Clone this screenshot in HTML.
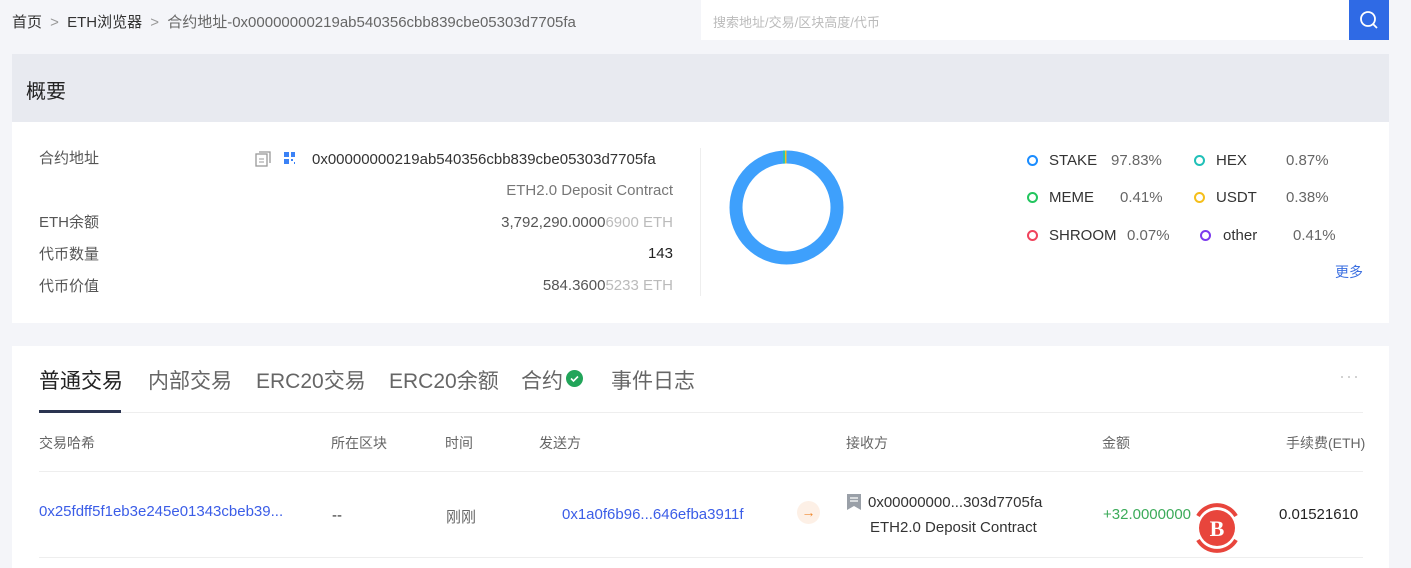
<!DOCTYPE html><html><head><meta charset="utf-8"><style>
*{margin:0;padding:0;box-sizing:border-box}
body{width:1411px;height:568px;background:#f4f5f9;font-family:"Liberation Sans","Noto Sans CJK SC",sans-serif;position:relative;overflow:hidden;color:#333}
.a{position:absolute;white-space:nowrap}
.d{position:absolute;width:11px;height:11px;border:2px solid;border-radius:50%}
.l{position:absolute;font-size:15px;color:#333;white-space:nowrap}
.p{position:absolute;font-size:15px;color:#666;white-space:nowrap}
.t{position:absolute;top:365px;font-size:20px;color:#666;white-space:nowrap}
</style></head><body>
<div class="a" style="left:12px;top:11px;font-size:15px;color:#333">首页 <span style="color:#999;margin:0 4px">&gt;</span> ETH浏览器 <span style="color:#999;margin:0 4px">&gt;</span> <span style="color:#666">合约地址-0x00000000219ab540356cbb839cbe05303d7705fa</span></div>
<div class="a" style="left:701px;top:0;width:648px;height:40px;background:#fff"></div>
<div class="a" style="left:713px;top:12px;font-size:13px;color:#bbb">搜索地址/交易/区块高度/代币</div>
<div class="a" style="left:1349px;top:0;width:40px;height:40px;background:#2f6ae5"><svg width="40" height="40"><circle cx="19" cy="19" r="7" fill="none" stroke="#fff" stroke-width="1.8"/><path d="M24 24l4 4" stroke="#fff" stroke-width="1.8"/></svg></div>

<div class="a" style="left:12px;top:54px;width:1377px;height:68px;background:#e8eaf0"></div>
<div class="a" style="left:26px;top:75px;font-size:20px;color:#222">概要</div>
<div class="a" style="left:12px;top:122px;width:1377px;height:201px;background:#fff"></div>
<div class="a" style="left:39px;top:143px;font-size:15px;color:#555;line-height:32px">合约地址<br><br>ETH余额<br>代币数量<br>代币价值</div>
<svg class="a" style="left:255px;top:151px" width="40" height="16"><rect x="1" y="3" width="11" height="12" fill="none" stroke="#999" stroke-width="1.3"/><path d="M4 1h11v11" fill="none" stroke="#999" stroke-width="1.3"/><path d="M4 8h5M4 11h5" stroke="#999"/><g fill="#3b82f6"><rect x="29" y="1" width="5" height="5"/><rect x="36" y="1" width="5" height="5"/><rect x="29" y="8" width="5" height="5"/><rect x="36" y="8" width="2" height="2"/><rect x="39" y="11" width="2" height="2"/></g></svg>
<div class="a" style="left:312px;top:151px;font-size:15px;color:#333">0x00000000219ab540356cbb839cbe05303d7705fa</div>
<div class="a" style="right:738px;top:182px;font-size:15px;color:#777">ETH2.0 Deposit Contract</div>
<div class="a" style="right:738px;top:214px;font-size:15px;color:#555">3,792,290.0000<span style="color:#bbb">6900 ETH</span></div>
<div class="a" style="right:738px;top:245px;font-size:15px;color:#222">143</div>
<div class="a" style="right:738px;top:277px;font-size:15px;color:#555">584.3600<span style="color:#bbb">5233 ETH</span></div>
<div class="a" style="left:700px;top:148px;width:1px;height:148px;background:#eee"></div>
<svg class="a" style="left:729px;top:150px" width="115" height="115"><circle cx="57.5" cy="57.5" r="50.5" fill="none" stroke="#3ea0fc" stroke-width="13"/><path d="M54 0.5h2v13h-2z" fill="#2bc2b8"/><path d="M56 0.5h1.5v13H56z" fill="#f4c21c"/></svg>

<div class="d" style="left:1027px;top:155px;border-color:#1a8cff"></div><div class="l" style="left:1049px;top:152px">STAKE</div><div class="p" style="left:1111px;top:152px">97.83%</div>
<div class="d" style="left:1194px;top:155px;border-color:#20c0b8"></div><div class="l" style="left:1216px;top:152px">HEX</div><div class="p" style="left:1286px;top:152px">0.87%</div>
<div class="d" style="left:1027px;top:192px;border-color:#22c55e"></div><div class="l" style="left:1049px;top:189px">MEME</div><div class="p" style="left:1120px;top:189px">0.41%</div>
<div class="d" style="left:1194px;top:192px;border-color:#f5bf1b"></div><div class="l" style="left:1216px;top:189px">USDT</div><div class="p" style="left:1286px;top:189px">0.38%</div>
<div class="d" style="left:1027px;top:230px;border-color:#f0435c"></div><div class="l" style="left:1049px;top:227px">SHROOM</div><div class="p" style="left:1127px;top:227px">0.07%</div>
<div class="d" style="left:1200px;top:230px;border-color:#7c3aed"></div><div class="l" style="left:1223px;top:227px">other</div><div class="p" style="left:1293px;top:227px">0.41%</div>
<div class="a" style="left:1335px;top:262px;font-size:14px;color:#3b6fe0">更多</div>

<div class="a" style="left:12px;top:346px;width:1377px;height:222px;background:#fff"></div>
<div class="t" style="left:39px;color:#222;font-size:21px">普通交易</div>
<div class="t" style="left:148px;font-size:21px">内部交易</div>
<div class="t" style="left:256px;font-size:21px">ERC20交易</div>
<div class="t" style="left:389px;font-size:21px">ERC20余额</div>
<div class="t" style="left:521px;font-size:21px">合约</div>
<div class="a" style="left:566px;top:370px;width:17px;height:17px;border-radius:50%;background:#22a55a"><svg width="17" height="17"><path d="M5 8.5l2.5 2.5 4.5-4.5" fill="none" stroke="#fff" stroke-width="1.6"/></svg></div>
<div class="t" style="left:611px;font-size:21px">事件日志</div>
<div class="a" style="left:1339px;top:366px;font-size:18px;color:#ccc;letter-spacing:1px">···</div>
<div class="a" style="left:39px;top:412px;width:1324px;height:1px;background:#eee"></div>
<div class="a" style="left:39px;top:410px;width:82px;height:3px;background:#2a3450"></div>
<div class="a" style="left:39px;top:433px;width:1324px;font-size:14px;color:#666"><span class="a" style="left:0">交易哈希</span><span class="a" style="left:292px">所在区块</span><span class="a" style="left:406px">时间</span><span class="a" style="left:500px">发送方</span><span class="a" style="left:807px">接收方</span><span class="a" style="left:1063px">金额</span><span class="a" style="left:1247px">手续费(ETH)</span></div>
<div class="a" style="left:39px;top:471px;width:1324px;height:1px;background:#eee"></div>
<div class="a" style="left:39px;top:557px;width:1324px;height:1px;background:#eee"></div>
<div class="a" style="left:39px;top:503px;font-size:15px;color:#3b5de7">0x25fdff5f1eb3e245e01343cbeb39...</div>
<div class="a" style="left:332px;top:507px;font-size:15px;color:#333">--</div>
<div class="a" style="left:446px;top:506px;font-size:15px;color:#666">刚刚</div>
<div class="a" style="left:562px;top:506px;font-size:15px;color:#3b5de7">0x1a0f6b96...646efba3911f</div>
<div class="a" style="left:797px;top:501px;width:23px;height:23px;border-radius:50%;background:#fdf0e6;color:#f08a30;font-size:14px;text-align:center;line-height:23px">→</div>
<svg class="a" style="left:847px;top:494px" width="14" height="16"><path d="M0 0h14v16l-7-4-7 4z" fill="#9aa0a8"/><path d="M3 4h8M3 7h8" stroke="#fff" stroke-width="1.3"/></svg>
<div class="a" style="left:868px;top:494px;font-size:15px;color:#333">0x00000000...303d7705fa</div>
<div class="a" style="left:870px;top:519px;font-size:15px;color:#333">ETH2.0 Deposit Contract</div>
<div class="a" style="left:1103px;top:506px;font-size:15px;color:#3cab5a">+32.0000000</div>
<svg class="a" style="left:1192px;top:500px" width="50" height="56"><path d="M6 16A22 22 0 0 1 44 16" fill="none" stroke="#e8453c" stroke-width="4"/><path d="M6 40A22 22 0 0 0 44 40" fill="none" stroke="#e8453c" stroke-width="4"/><circle cx="25" cy="28" r="18" fill="#e8453c"/><text x="25" y="36" text-anchor="middle" font-family="Liberation Serif" font-weight="bold" font-size="22" fill="#fff">B</text></svg>
<div class="a" style="left:1279px;top:506px;font-size:15px;color:#222">0.01521610</div>
</body></html>
